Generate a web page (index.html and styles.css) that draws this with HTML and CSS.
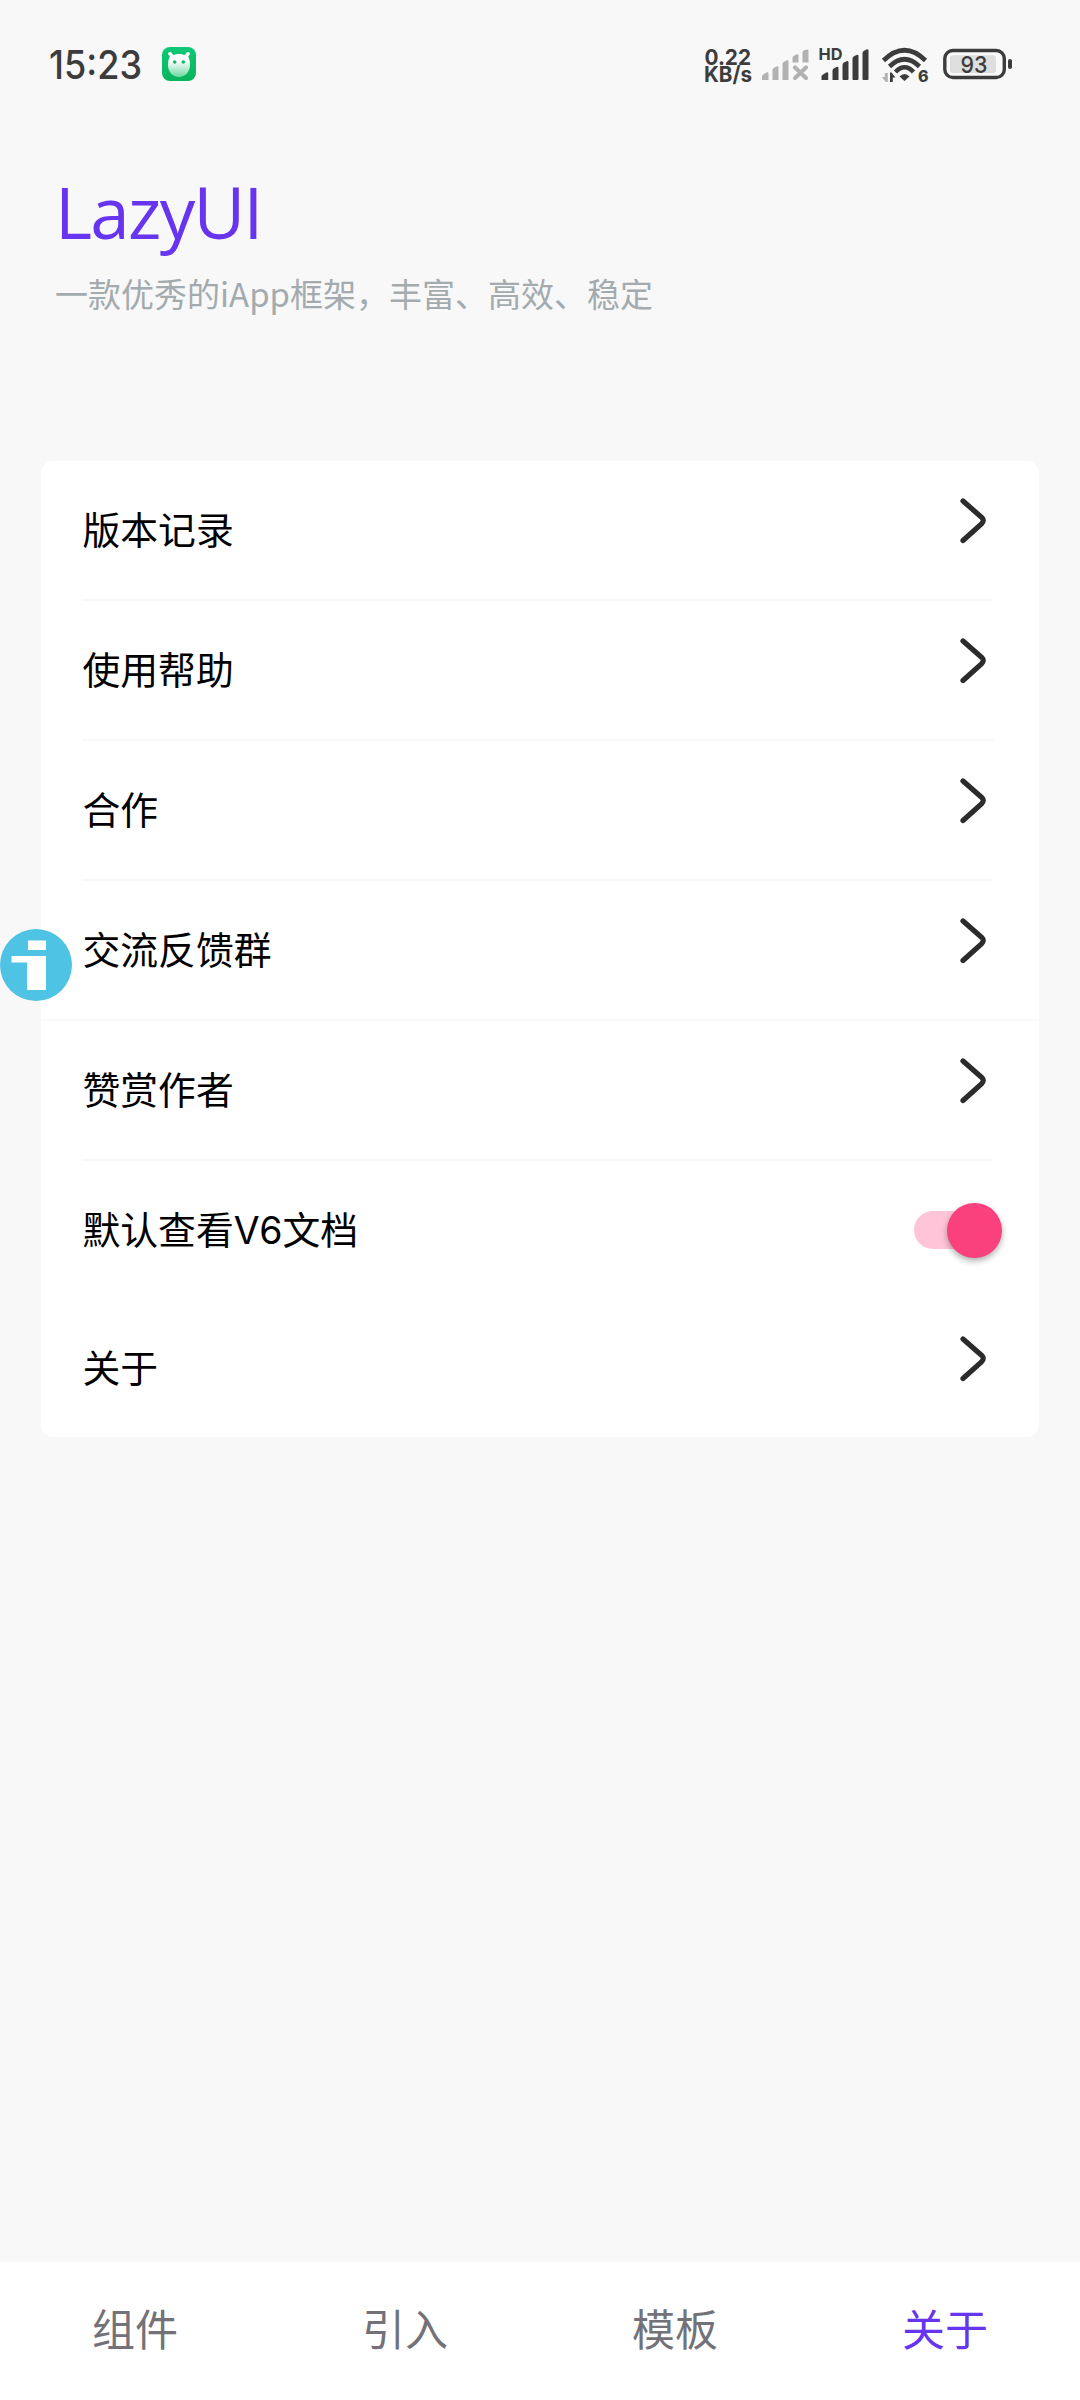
FILE: index.html
```html
<!DOCTYPE html>
<html lang="zh-CN">
<head>
<meta charset="utf-8">
<title>LazyUI</title>
<link rel="stylesheet" href="styles.css">
</head>
<body>
<div class="screen">
  <header class="status">
    <svg class="clock" width="92" height="60" viewBox="0 0 92 60"><text x="0" y="44.500" textLength="93" lengthAdjust="spacingAndGlyphs">15:23</text></svg>
    <svg class="app" width="34" height="34" viewBox="0 0 34 34">
      <defs>
        <linearGradient id="bg" x1="0" y1="0" x2="0" y2="1"><stop offset="0" stop-color="#0fc878"/><stop offset="1" stop-color="#08b45c"/></linearGradient>
        <linearGradient id="face" x1="0" y1="0" x2="0" y2="1"><stop offset="0.35" stop-color="#fff"/><stop offset="1" stop-color="#6fd8a0"/></linearGradient>
      </defs>
      <rect width="34" height="34" rx="8" fill="url(#bg)"/>
      <path d="M8.500 5c-1.500-.3-3 1-2.200 2.600.4.800 1.300 1.200 1.500 2C6.500 12 6 15 6 18c0 7 4.800 12 11 12s11-5 11-12c0-3-.5-6-1.800-8.400.2-.8 1.100-1.200 1.500-2C28.500 6 27 4.700 25.500 5c-1.500.3-1.500 2.500-3 3-3-1.500-8-1.500-11 0-1.500-.5-1.500-2.700-3-3z" fill="url(#face)"/>
      <circle cx="12.700" cy="15" r="1.800" fill="#12b866"/><circle cx="21.300" cy="15" r="1.800" fill="#12b866"/>
    </svg>
    <svg class="system" width="312" height="60" viewBox="702 34 312 60">
      <g class="speed">
        <text x="704.500" y="64.500" textLength="46.500" lengthAdjust="spacingAndGlyphs">0.22</text>
        <text x="704" y="81.500" textLength="48" lengthAdjust="spacingAndGlyphs">KB/s</text>
      </g>
      <g fill="#b2b2b2">
        <path d="M762 80v-3.500q0-1.500 1.500-2.200l3-1.800q2-.8 2 1V80zM772.500 80V70q0-1.500 1.500-2.200l2.500-1.300q2-.8 2 1V80zM782.500 80V64q0-1.500 1.500-2.200l2.500-1.300q2-.8 2 1V80zM792.500 62.500V58q0-1.500 1.500-2.200l2.500-1.300q2-.8 2 1v7zM802.500 62.500V52.500q0-1.500 1.500-2.200l2.500-.6q2-.5 2 1.300v11.500z"/>
        <path d="M795 67.500l11 10.500m0-10.500L795 78" stroke="#b2b2b2" stroke-width="4.200" stroke-linecap="round"/>
      </g>
      <text class="hd" x="818.500" y="60" textLength="24" lengthAdjust="spacingAndGlyphs">HD</text>
      <g fill="#3c3c3c">
        <path d="M821.500 80v-3.500q0-1 1.200-1.800l3.500-2.200q2-.8 2 1V80zM832.500 80V70.500q0-1.500 1.500-2.200l2.500-1.300q2-.8 2 1v12zM842.500 79V65q0-1.700 1.500-2.500l2.500-1.200q2-.8 2 1V79q0 1-1 1h-4q-1 0-1-1zM852.500 79V58.500q0-1.500 1.500-2.200l2.500-1.300q2-.8 2 1V79q0 1-1 1h-4q-1 0-1-1zM862.500 79V53q0-1.500 1.500-2.200l2.500-1.300q2-.8 2 1V79q0 1-1 1h-4q-1 0-1-1z"/>
      </g>
      <g fill="none" stroke="#3c3c3c" stroke-width="4.600">
        <path d="M883.500 60.500Q904.500 40 925.500 60.500"/>
        <path d="M889.500 66.500Q904.500 52 919.500 66.500"/>
        <path d="M895.500 72Q904.500 62.500 913.500 72"/>
      </g>
      <path d="M899.500 76.500q5-5 10 0L904.500 81z" fill="#3c3c3c"/>
      <path d="M887.800 73v9h-2l-4-5h3v-4z" fill="#b2b2b2"/>
      <path d="M890 82v-9.500h1.500l4 5h-2.700V82z" fill="#3c3c3c"/>
      <text class="six" x="918" y="81.500" textLength="10.500" lengthAdjust="spacingAndGlyphs">6</text>
      <rect x="944.800" y="50.500" width="59.500" height="27" rx="8" fill="none" stroke="#3c3c3c" stroke-width="3.400"/>
      <rect x="950" y="55.200" width="46" height="17.800" rx="3" fill="#dedede"/>
      <rect x="1008" y="59" width="4" height="10" rx="2" fill="#3c3c3c"/>
      <text class="level" x="960.500" y="72.500" textLength="27" lengthAdjust="spacingAndGlyphs">93</text>
    </svg>
  </header>

  <section class="hero">
    <h1 class="title">LazyUI</h1>
    <p class="subtitle">一款优秀的iApp框架，丰富、高效、稳定</p>
  </section>

  <main class="card">
    <div class="row"><span class="label">版本记录</span><svg class="chevron" viewBox="0 0 26 46"><path d="M3 3L21.500 19.200Q25 22.500 21.500 25.800L3 42.500"/></svg></div>
    <hr class="line">
    <div class="row"><span class="label">使用帮助</span><svg class="chevron" viewBox="0 0 26 46"><path d="M3 3L21.500 19.200Q25 22.500 21.500 25.800L3 42.500"/></svg></div>
    <hr class="line">
    <div class="row"><span class="label">合作</span><svg class="chevron" viewBox="0 0 26 46"><path d="M3 3L21.500 19.200Q25 22.500 21.500 25.800L3 42.500"/></svg></div>
    <hr class="line">
    <div class="row"><span class="label">交流反馈群</span><svg class="chevron" viewBox="0 0 26 46"><path d="M3 3L21.500 19.200Q25 22.500 21.500 25.800L3 42.500"/></svg></div>
    <hr class="line full">
    <div class="row"><span class="label">赞赏作者</span><svg class="chevron" viewBox="0 0 26 46"><path d="M3 3L21.500 19.200Q25 22.500 21.500 25.800L3 42.500"/></svg></div>
    <hr class="line">
    <div class="row"><span class="label">默认查看<span class="latin">V6</span>文档</span><div class="switch"><div class="thumb"></div></div></div>
    <div class="row"><span class="label">关于</span><svg class="chevron" viewBox="0 0 26 46"><path d="M3 3L21.500 19.200Q25 22.500 21.500 25.800L3 42.500"/></svg></div>
  </main>

  <nav class="tabs">
    <span class="tab">组件</span>
    <span class="tab">引入</span>
    <span class="tab">模板</span>
    <span class="tab active">关于</span>
  </nav>

  <svg class="floating" width="72" height="72" viewBox="0 0 72 72">
    <circle cx="36" cy="36" r="36" fill="#4fc3e3"/>
    <path d="M28 11.500h18V21H28zM11.500 27H46v34H27V33.500H11.500z" fill="#fff"/>
  </svg>
</div>
</body>
</html>
```
FILE: styles.css
```css
* { box-sizing: border-box; }
body { margin: 0; background: #f8f8f8; }
.screen {
  position: relative;
  display: flex;
  flex-direction: column;
  width: 1080px;
  height: 2400px;
  font-family: "Noto Sans CJK SC", sans-serif;
}
.status {
  display: flex;
  align-items: center;
  height: 128px;
  padding: 0 66px 0 49px;
}
.status svg { flex: none; overflow: visible; }
.status text { font-family: Inter, sans-serif; fill: #3c3c3c; }
.clock text { font-size: 39px; font-weight: 500; }
.app { margin-left: 21px; }
.system { margin-left: auto; }
.status .speed text { font-size: 22px; font-weight: 700; }
.status .hd { font-size: 16.500px; font-weight: 700; }
.status .six { font-size: 16px; font-weight: 800; }
.status .level { font-size: 23.500px; font-weight: 500; }

.hero { height: 333px; padding: 41px 55px 0; }
.title {
  margin: 0;
  color: #6734ef;
  font: 400 71px/86px "Open Sans", sans-serif;
  letter-spacing: -1.700px;
}
.subtitle {
  margin: 14px 0 0;
  color: #a3abae;
  font-size: 33px;
  line-height: 48px;
  font-weight: 400;
}

.card {
  flex: none;
  width: 998px;
  margin: 0 41px;
  background: #fff;
  border-radius: 12px;
}
.row {
  display: flex;
  align-items: center;
  justify-content: space-between;
  height: 138px;
  padding: 0 37px 0 41.500px;
  color: #000;
  font-size: 37.800px;
}
.label { padding-bottom: 6px; }
.latin { font-family: Inter, sans-serif; font-size: 37.500px; line-height: 1; }
.line { height: 2px; margin: 0 45px 0 41px; border: 0; background: #f9f9f9; }
.line.full { margin: 0; }
.chevron {
  width: 26px;
  height: 46px;
  margin: 0 16px 19px 0;
  fill: none;
  stroke: #2b2b2b;
  stroke-width: 5.200px;
  stroke-linecap: round;
  stroke-linejoin: round;
}
.switch {
  display: flex;
  align-items: center;
  justify-content: flex-end;
  width: 88px;
  height: 38px;
  border-radius: 19px;
  background: linear-gradient(90deg, #fec5d9 70%, transparent 70%);
}
.thumb {
  width: 55px;
  height: 55px;
  border-radius: 50%;
  background: #fb407e;
  box-shadow: 0 3px 6px rgba(0, 0, 0, 0.32);
}

.tabs {
  display: grid;
  grid-template-columns: repeat(4, 1fr);
  align-items: center;
  height: 138px;
  padding-bottom: 8px;
  margin-top: auto;
  background: #fff;
  color: #737278;
  font-size: 43px;
  text-align: center;
}
.active { color: #6734ef; }
.floating { position: absolute; left: 0; top: 929px; }
```
